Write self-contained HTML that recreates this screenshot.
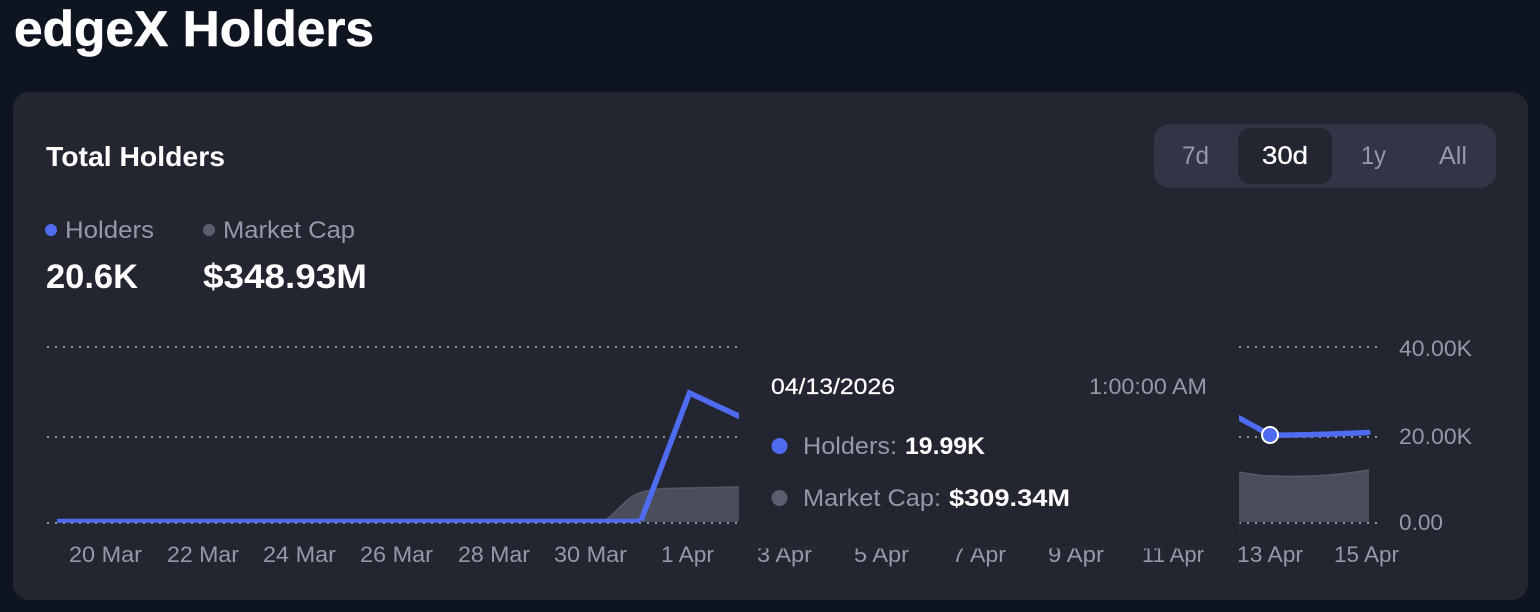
<!DOCTYPE html>
<html lang="en">
<head>
<meta charset="utf-8">
<title>edgeX Holders</title>
<style>
html,body{margin:0;padding:0;width:1540px;height:612px;overflow:hidden;background:#0e1420}
svg{display:block;font-family:"Liberation Sans",Arial,sans-serif}
.g{fill:#9598a9}
.w{fill:#fff}
.b{font-weight:700}
.ax{font-size:22.5px;fill:#9598a9}
</style>
</head>
<body>
<svg width="1540" height="612" viewBox="0 0 1540 612" xmlns="http://www.w3.org/2000/svg">
  <rect width="1540" height="612" fill="#0e1420"/>
  <text x="14" y="46" class="w b" font-size="50" stroke="#fff" stroke-width="0.6" textLength="360" lengthAdjust="spacingAndGlyphs">edgeX Holders</text>

  <rect x="13" y="92" width="1515" height="508" rx="16" fill="#232530"/>

  <text x="46" y="166" class="w b" font-size="27.5" textLength="179" lengthAdjust="spacingAndGlyphs">Total Holders</text>

  <rect x="1154" y="124" width="342" height="64" rx="16" fill="#323546"/>
  <rect x="1238" y="128" width="94" height="56" rx="12" fill="#232530"/>
  <text x="1182" y="164" class="g" font-size="25" textLength="27" lengthAdjust="spacingAndGlyphs">7d</text>
  <text x="1262" y="164" class="w" font-size="25" stroke="#fff" stroke-width="0.3" textLength="46" lengthAdjust="spacingAndGlyphs">30d</text>
  <text x="1361" y="164" class="g" font-size="25" textLength="25" lengthAdjust="spacingAndGlyphs">1y</text>
  <text x="1439" y="164" class="g" font-size="25" textLength="28" lengthAdjust="spacingAndGlyphs">All</text>

  <circle cx="51" cy="230" r="6" fill="#4f6cf0"/>
  <text x="65" y="238" class="g" font-size="24" textLength="89" lengthAdjust="spacingAndGlyphs">Holders</text>
  <circle cx="209" cy="230" r="6" fill="#5a5d6d"/>
  <text x="223" y="238" class="g" font-size="24" textLength="132" lengthAdjust="spacingAndGlyphs">Market Cap</text>
  <text x="46" y="288" class="w b" font-size="34" textLength="92" lengthAdjust="spacingAndGlyphs">20.6K</text>
  <text x="203" y="288" class="w b" font-size="34" textLength="164" lengthAdjust="spacingAndGlyphs">$348.93M</text>

  <g stroke="#8f92a3" stroke-width="2" stroke-dasharray="2 6" fill="none">
    <line x1="47" y1="347" x2="1378" y2="347"/>
    <line x1="47" y1="437" x2="1378" y2="437"/>
    <line x1="47" y1="523" x2="1378" y2="523"/>
  </g>

  <path d="M603 522 C615 516 625 497 640 493 C650 489 665 488 690 488 L739 487 L1239 472 C1250 474 1260 476 1270 476 C1300 477 1335 476 1369 470 L1369 522 Z" fill="#4a4d5b"/>
  <path d="M603 521 C615 516 625 497 640 493 C650 489 665 488 690 488 L739 487 M1239 472 C1250 474 1260 476 1270 476 C1300 477 1335 476 1369 470" fill="none" stroke="#565966" stroke-width="1.5"/>

  <path d="M57 520.7 L640 520.7" fill="none" stroke="#4f6cf0" stroke-width="4"/>
  <path d="M641 520.7 L689.5 393 L745 419 M1232 414 L1270 435" fill="none" stroke="#4f6cf0" stroke-width="5.5" stroke-linejoin="miter"/>
  <path d="M1270 435 C1300 435.5 1335 434 1368 432.5" fill="none" stroke="#4f6cf0" stroke-width="5.5" stroke-linecap="round"/>
  <circle cx="1270" cy="435" r="8" fill="#4f6cf0" stroke="#fff" stroke-width="2"/>

  <g class="ax">
    <text x="1399" y="356" textLength="73" lengthAdjust="spacingAndGlyphs">40.00K</text>
    <text x="1399" y="444" textLength="73" lengthAdjust="spacingAndGlyphs">20.00K</text>
    <text x="1399" y="530" textLength="44" lengthAdjust="spacingAndGlyphs">0.00</text>
    <text x="69" y="562" textLength="73" lengthAdjust="spacingAndGlyphs">20 Mar</text>
    <text x="167" y="562" textLength="72" lengthAdjust="spacingAndGlyphs">22 Mar</text>
    <text x="263" y="562" textLength="73" lengthAdjust="spacingAndGlyphs">24 Mar</text>
    <text x="360" y="562" textLength="73" lengthAdjust="spacingAndGlyphs">26 Mar</text>
    <text x="458" y="562" textLength="72" lengthAdjust="spacingAndGlyphs">28 Mar</text>
    <text x="554" y="562" textLength="73" lengthAdjust="spacingAndGlyphs">30 Mar</text>
    <text x="661" y="562" textLength="53" lengthAdjust="spacingAndGlyphs">1 Apr</text>
    <text x="757" y="562" textLength="55" lengthAdjust="spacingAndGlyphs">3 Apr</text>
    <text x="854" y="562" textLength="55" lengthAdjust="spacingAndGlyphs">5 Apr</text>
    <text x="952" y="562" textLength="54" lengthAdjust="spacingAndGlyphs">7 Apr</text>
    <text x="1048" y="562" textLength="56" lengthAdjust="spacingAndGlyphs">9 Apr</text>
    <text x="1142" y="562" textLength="62" lengthAdjust="spacingAndGlyphs">11 Apr</text>
    <text x="1237" y="562" textLength="66" lengthAdjust="spacingAndGlyphs">13 Apr</text>
    <text x="1334" y="562" textLength="65" lengthAdjust="spacingAndGlyphs">15 Apr</text>
  </g>

  <rect x="739" y="336" width="500" height="212" rx="16" fill="#232530"/>
  <path d="M739 520 L739 532 Q739 548 755 548 L1223 548 Q1239 548 1239 532 L1239 520" fill="none" stroke="#282a36" stroke-width="1"/>

  <text x="771" y="394" class="w" font-size="22" stroke="#fff" stroke-width="0.25" textLength="124" lengthAdjust="spacingAndGlyphs">04/13/2026</text>
  <text x="1089" y="394" class="g" font-size="22" textLength="118" lengthAdjust="spacingAndGlyphs">1:00:00 AM</text>

  <circle cx="779.5" cy="446" r="8" fill="#4f6cf0"/>
  <text x="803" y="454" class="g" font-size="24" textLength="94" lengthAdjust="spacingAndGlyphs">Holders:</text>
  <text x="905" y="454" class="w b" font-size="24" textLength="80" lengthAdjust="spacingAndGlyphs">19.99K</text>

  <circle cx="779.5" cy="498" r="8" fill="#5a5d6d"/>
  <text x="803" y="506" class="g" font-size="24" textLength="138" lengthAdjust="spacingAndGlyphs">Market Cap:</text>
  <text x="949" y="506" class="w b" font-size="24" textLength="121" lengthAdjust="spacingAndGlyphs">$309.34M</text>
</svg>
</body>
</html>
